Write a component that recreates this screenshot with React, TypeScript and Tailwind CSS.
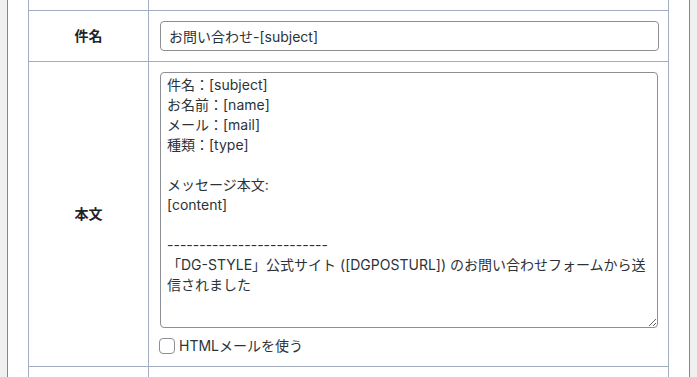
const BODY = `件名：[subject]
お名前：[name]
メール：[mail]
種類：[type]

メッセージ本文:
[content]

-------------------------
「DG-STYLE」公式サイト ([DGPOSTURL]) のお問い合わせフォームから送信されました`;

const FONT = "font-['Inter','Noto_Sans_CJK_JP',sans-serif]";

function Label({ children }: { children?: React.ReactNode }) {
  return (
    <div className="flex w-[120px] shrink-0 items-center justify-center border-r border-[#a3adbf] pb-px text-sm font-bold text-[#1d2327]">
      {children}
    </div>
  );
}

export default function App() {
  return (
    <div className={`h-[377px] w-[697px] overflow-hidden bg-[#f0f0f1] ${FONT}`}>
      <div className="ml-[7px] h-full w-[683px] border-x border-[#4f94d4] bg-white pl-[20px]">
        <div className="w-[641px] border-x border-[#a3adbf]">
          <div className="flex h-[11px] border-b border-[#a3adbf]">
            <Label />
          </div>

          <div className="flex h-[51px] border-b border-[#a3adbf]">
            <Label>件名</Label>
            <div className="flex items-center pl-[11px]">
              <input
                readOnly
                defaultValue="お問い合わせ-[subject]"
                className="h-[30px] w-[499px] rounded-[4px] border border-[#8c8f94] px-2 text-sm text-[#2c3338] outline-none"
              />
            </div>
          </div>

          <div className="flex h-[305px] border-b border-[#a3adbf]">
            <Label>本文</Label>
            <div className="flex flex-col pl-[11px] pt-[10px]">
              <textarea
                readOnly
                defaultValue={BODY}
                className="h-[256px] w-[498px] rounded-[4px] border border-[#8c8f94] px-[6px] py-[2px] text-sm leading-5 text-[#2c3338] outline-none"
              />
              <label className="mt-[8px] flex items-center gap-1 text-sm text-[#2c3338]">
                <span className="-ml-px h-4 w-4 rounded-[4px] border border-[#8c8f94] bg-white" />
                HTMLメールを使う
              </label>
            </div>
          </div>

          <div className="flex h-[40px]">
            <Label />
          </div>
        </div>
      </div>
    </div>
  );
}
